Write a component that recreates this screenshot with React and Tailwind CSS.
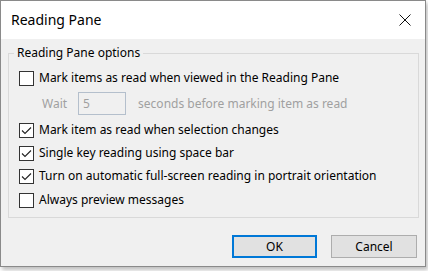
import React from 'react'

function CheckBox({ checked }) {
  return (
    <span className="w-[15px] h-[15px] shrink-0 border border-[#333333] bg-white flex items-center justify-center">
      {checked && (
        <svg width="13" height="13" viewBox="0 0 13 13" fill="none">
          <path d="M2 6.5 L5 9.5 L11 3.5" stroke="#222222" strokeWidth="1.1" />
        </svg>
      )}
    </span>
  )
}

function Option({ checked, label, className = '' }) {
  return (
    <label className={`flex items-center gap-[5px] h-[16px] ${className}`}>
      <CheckBox checked={checked} />
      <span className="leading-[16px] whitespace-nowrap">{label}</span>
    </label>
  )
}

export default function App() {
  return (
    <div
      className="w-[428px] h-[271px] bg-white text-[12px] text-black"
      style={{ fontFamily: '"Segoe UI", "Noto Sans", sans-serif' }}
    >
      <div className="w-[426px] h-[267px] border border-[#8a8a8a] bg-[#f0f0f0] flex flex-col shadow-[2px_3px_4px_rgba(0,0,0,0.25)]">
        {/* Title bar */}
        <div className="h-[38px] bg-white flex items-center justify-between pl-[10px] pr-[14px]">
          <span className="text-[14px] leading-[20px]">Reading Pane</span>
          <svg width="12" height="12" viewBox="0 0 12 12" fill="none">
            <path d="M0.5 0.5 L11.5 11.5 M11.5 0.5 L0.5 11.5" stroke="#111111" strokeWidth="1" />
          </svg>
        </div>

        <div className="flex flex-col pl-[7px] pr-[6px]">
          <fieldset className="border border-[#d9d9d9] pl-[10px] pb-[9px] mt-[6px]">
            <legend className="-ml-[5px] px-[3px] leading-[16px]">Reading Pane options</legend>
            <Option label="Mark items as read when viewed in the Reading Pane" className="mt-[9px]" />
            <div className="flex items-center h-[23px] mt-[6px] pl-[23px] text-[#a0a0a0]">
              <span>Wait</span>
              <span className="ml-[11px] w-[48px] h-[23px] border border-[#b4bfcc] flex items-center pl-[4px] leading-none">5</span>
              <span className="ml-[12px] whitespace-nowrap">seconds before marking item as read</span>
            </div>
            <Option checked label="Mark item as read when selection changes" className="mt-[7px]" />
            <Option checked label="Single key reading using space bar" className="mt-[7px]" />
            <Option checked label="Turn on automatic full-screen reading in portrait orientation" className="mt-[7px]" />
            <Option label="Always preview messages" className="mt-[8px]" />
          </fieldset>
        </div>

        <div className="flex justify-end gap-[14px] pr-[8px] mt-[17px]">
          <button className="w-[85px] h-[23px] bg-[#e1e1e1] border-2 border-[#0078d7] leading-none">OK</button>
          <button className="w-[86px] h-[23px] bg-[#e1e1e1] border border-[#adadad] leading-none">Cancel</button>
        </div>
      </div>
    </div>
  )
}
